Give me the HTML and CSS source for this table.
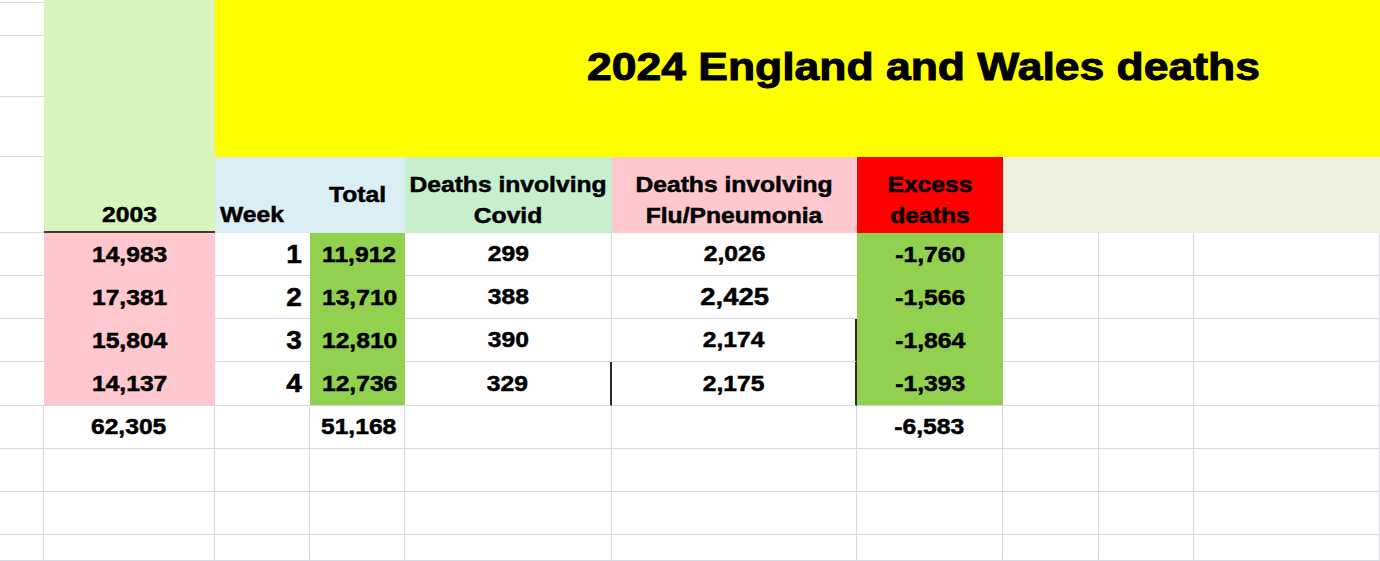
FILE: index.html
```html
<!DOCTYPE html>
<html lang="en">
<head>
<meta charset="utf-8">
<title>2024 England and Wales deaths</title>
<link rel="stylesheet" href="styles.css">
</head>
<body>
<div class="sheet">
  <div class="cell yearhead"><span class="t">2003</span></div>
  <div class="cell title"><span class="t">2024 England and Wales deaths</span></div>

  <div class="cell nr"></div>
  <div class="cell nr"></div>
  <div class="cell nr"></div>
  <div class="cell nr"></div>

  <div class="cell nr"></div>
  <div class="cell fill blue week"><span class="t">Week</span></div>
  <div class="cell fill blue"><span class="t">Total</span></div>
  <div class="cell fill mint hd2"><span class="t">Deaths involving<br>Covid</span></div>
  <div class="cell fill pinkh hd2"><span class="t">Deaths involving<br>Flu/Pneumonia</span></div>
  <div class="cell fill red hd2"><span class="t">Excess<br>deaths</span></div>
  <div class="cell fill pale span3"></div>

  <div class="cell nr"></div>
  <div class="cell fill pink"><span class="t">14,983</span></div>
  <div class="cell nr wk"><span class="t">1</span></div>
  <div class="cell fill green tot"><span class="t">11,912</span></div>
  <div class="cell"><span class="t">299</span></div>
  <div class="cell nr"><span class="t">2,026</span></div>
  <div class="cell fill green"><span class="t">-1,760</span></div>
  <div class="cell"></div>
  <div class="cell"></div>
  <div class="cell"></div>

  <div class="cell nr"></div>
  <div class="cell fill pink"><span class="t">17,381</span></div>
  <div class="cell nr wk"><span class="t">2</span></div>
  <div class="cell fill green tot"><span class="t">13,710</span></div>
  <div class="cell"><span class="t">388</span></div>
  <div class="cell nr big"><span class="t">2,425</span></div>
  <div class="cell fill green"><span class="t">-1,566</span></div>
  <div class="cell"></div>
  <div class="cell"></div>
  <div class="cell"></div>

  <div class="cell nr"></div>
  <div class="cell fill pink"><span class="t">15,804</span></div>
  <div class="cell nr wk"><span class="t">3</span></div>
  <div class="cell fill green tot"><span class="t">12,810</span></div>
  <div class="cell"><span class="t">390</span></div>
  <div class="cell dr"><span class="t">2,174</span></div>
  <div class="cell fill green"><span class="t">-1,864</span></div>
  <div class="cell"></div>
  <div class="cell"></div>
  <div class="cell"></div>

  <div class="cell nr"></div>
  <div class="cell fill pink last"><span class="t">14,137</span></div>
  <div class="cell nr wk"><span class="t">4</span></div>
  <div class="cell fill green tot last"><span class="t">12,736</span></div>
  <div class="cell dr"><span class="t">329</span></div>
  <div class="cell dr"><span class="t">2,175</span></div>
  <div class="cell fill green last"><span class="t">-1,393</span></div>
  <div class="cell"></div>
  <div class="cell"></div>
  <div class="cell"></div>

  <div class="cell"></div>
  <div class="cell"><span class="t">62,305</span></div>
  <div class="cell"></div>
  <div class="cell tot"><span class="t">51,168</span></div>
  <div class="cell"></div>
  <div class="cell"></div>
  <div class="cell"><span class="t">-6,583</span></div>
  <div class="cell"></div>
  <div class="cell"></div>
  <div class="cell"></div>

  <div class="cell"></div><div class="cell"></div><div class="cell"></div><div class="cell"></div><div class="cell"></div>
  <div class="cell"></div><div class="cell"></div><div class="cell"></div><div class="cell"></div><div class="cell"></div>

  <div class="cell"></div><div class="cell"></div><div class="cell"></div><div class="cell"></div><div class="cell"></div>
  <div class="cell"></div><div class="cell"></div><div class="cell"></div><div class="cell"></div><div class="cell"></div>

  <div class="cell"></div><div class="cell"></div><div class="cell"></div><div class="cell"></div><div class="cell"></div>
  <div class="cell"></div><div class="cell"></div><div class="cell"></div><div class="cell"></div><div class="cell"></div>
</div>
</body>
</html>
```

FILE: styles.css
```css
:root {
  --grid: #d5d9e3;
  --dark: #2a2a2a;
}

html, body {
  margin: 0;
  padding: 0;
  background: #ffffff;
}

body {
  width: 1380px;
  height: 561px;
  overflow: hidden;
  font-family: "Liberation Sans", Arial, sans-serif;
  font-weight: 700;
  color: #000000;
}

.sheet {
  display: grid;
  grid-template-columns: 44px 171px 95px 95px 207px 245px 146px 96px 95px 1fr;
  grid-template-rows: 3px 33px 61px 60px 76px 43px 43px 43px 44px 43px 43px 43px 26px;
  width: 1380px;
  height: 561px;
}

.cell {
  box-sizing: border-box;
  min-width: 0;
  min-height: 0;
  border-right: 1px solid var(--grid);
  border-bottom: 1px solid var(--grid);
  display: flex;
  align-items: center;
  justify-content: center;
  font-size: 22px;
  line-height: normal;
}

.t {
  display: inline-block;
  white-space: nowrap;
  transform: scaleX(1.12);
  -webkit-text-stroke: 0.5px #000000;
}

.nr { border-right: 0; }
.dr { border-right: 2px solid var(--dark); }

.fill { border: 0; }
.fill.last { border-bottom: 1px solid var(--grid); }

.title {
  grid-column: 3 / -1;
  grid-row: 1 / 5;
  background: #ffff00;
  border: 0;
  align-items: flex-start;
  justify-content: flex-start;
  padding: 48px 0 0 372px;
  font-size: 38px;
  line-height: 1;
}
.title .t {
  transform-origin: left center;
  transform: scaleX(1.17);
  -webkit-text-stroke: 1px #000000;
}

.yearhead {
  grid-column: 2;
  grid-row: 1 / 6;
  background: #d8f5bc;
  border: 0;
  border-bottom: 2px solid #3a3a3a;
  align-items: flex-end;
  padding-bottom: 3px;
}

.span3 { grid-column: span 3; }

.blue { background: #daeef3; }
.mint { background: #c6efce; }
.pinkh { background: #ffc7ce; }
.red { background: #ff0000; }
.pale { background: #ebf1de; }
.pink { background: #ffc7ce; }
.green { background: #92d050; }

.week {
  align-items: flex-end;
  justify-content: flex-start;
  padding: 0 0 5px 5px;
}
.week .t { transform-origin: left center; }

.hd2 {
  align-items: flex-end;
  padding-bottom: 2px;
  line-height: 31px;
  text-align: center;
}

.wk {
  justify-content: flex-end;
  padding-right: 8px;
  font-size: 25px;
}
.wk .t { transform-origin: right center; }

.tot { padding-left: 4px; }

.big { font-size: 24.5px; }
```
